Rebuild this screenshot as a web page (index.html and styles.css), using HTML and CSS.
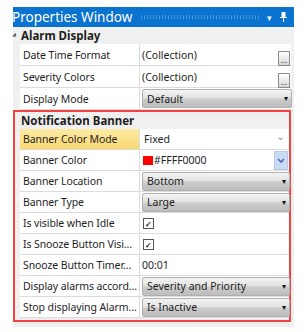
FILE: index.html
```html
<!DOCTYPE html>
<html>
<head>
  <meta charset="UTF-8">
  <title>Properties Window</title>
  <link rel="stylesheet" href="styles.css">
</head>
<body>
  <div class="panel">
    <div class="titlebar">
      <span class="title">Properties Window</span>
      <span class="grip"></span>
      <span class="tb-arrow">&#9662;</span>
      <svg class="pin" width="7" height="10" viewBox="0 0 7 10">
        <rect x="1.5" y="0" width="4" height="5" fill="#fff"/>
        <rect x="0" y="5" width="7" height="1" fill="#fff"/>
        <rect x="3" y="6" width="1" height="4" fill="#fff"/>
      </svg>
    </div>

    <div class="grid">
      <div class="category"><span class="toggle">&#9698;</span>Alarm Display</div>

      <div class="row tall">
        <div class="name">Date Time Format</div>
        <div class="value">(Collection)<span class="ellipsis">...</span></div>
      </div>
      <div class="row tall">
        <div class="name">Severity Colors</div>
        <div class="value">(Collection)<span class="ellipsis">...</span></div>
      </div>
      <div class="row tall">
        <div class="name">Display Mode</div>
        <div class="value"><div class="combo">Default<span class="tri">&#9662;</span></div></div>
      </div>

      <div class="marked">
        <div class="category">Notification Banner</div>

        <div class="row selected">
          <div class="name">Banner Color Mode</div>
          <div class="value flat">Fixed<span class="chev">&#8964;</span></div>
        </div>
        <div class="row">
          <div class="name">Banner Color</div>
          <div class="value"><span class="swatch"></span>#FFFF0000<span class="color-btn">
            <svg width="8" height="6" viewBox="0 0 8 6"><path d="M1 1 L4 4 L7 1" stroke="#4a68b0" stroke-width="1.6" fill="none"/></svg>
          </span></div>
        </div>
        <div class="row">
          <div class="name">Banner Location</div>
          <div class="value"><div class="combo">Bottom<span class="tri">&#9662;</span></div></div>
        </div>
        <div class="row">
          <div class="name">Banner Type</div>
          <div class="value"><div class="combo">Large<span class="tri">&#9662;</span></div></div>
        </div>
        <div class="row">
          <div class="name">Is visible when Idle</div>
          <div class="value"><span class="check">&#10003;</span></div>
        </div>
        <div class="row">
          <div class="name">Is Snooze Button Visi...</div>
          <div class="value"><span class="check">&#10003;</span></div>
        </div>
        <div class="row">
          <div class="name">Snooze Button Timer...</div>
          <div class="value">00:01</div>
        </div>
        <div class="row">
          <div class="name">Display alarms accord...</div>
          <div class="value"><div class="combo">Severity and Priority<span class="tri">&#9662;</span></div></div>
        </div>
        <div class="row">
          <div class="name">Stop displaying Alarm...</div>
          <div class="value"><div class="combo">Is Inactive<span class="tri">&#9662;</span></div></div>
        </div>
      </div>
    </div>
  </div>
</body>
</html>
```

FILE: styles.css
```css
body { margin: 0; background: #fff; font-family: "Noto Sans", "Open Sans", sans-serif; font-size: 10.5px; color: #1e1e1e; }

.panel { margin: 7px 0 0 13px; width: 281px; }

.titlebar { height: 20px; background: #0a72cf; color: #fff; display: flex; align-items: center; overflow: hidden; }
.title { font-size: 13.5px; margin-left: -1px; white-space: nowrap; }
.grip { flex: 1; height: 4px; margin: 0 8px 0 8px;
  background-image: radial-gradient(circle, rgba(255,255,255,0.28) 0.5px, transparent 0.7px);
  background-size: 3px 2px; }
.tb-arrow { font-size: 9px; margin-right: 8px; }
.pin { margin-right: 7px; }

.grid { background: #f0f0f0; padding-bottom: 5px; }

.category { height: 17px; display: flex; align-items: center; font-weight: bold; font-size: 11.5px; padding-left: 8px; position: relative; }
.toggle { position: absolute; left: -1px; top: 4px; font-size: 5px; color: #555; font-weight: normal; }

.row { display: flex; margin: 0 3px 0 7px; background: #fff; border-bottom: 1px solid #dcdcdc; height: 20px; }
.row.tall { height: 21px; }
.name { width: 116px; padding-left: 3px; border-right: 1px solid #dcdcdc; display: flex; align-items: center; white-space: nowrap; overflow: hidden; letter-spacing: -0.1px; }
.value { flex: 1; display: flex; align-items: center; padding-left: 2px; position: relative; white-space: nowrap; }

.selected .name { background: linear-gradient(#fdeaa4, #f9d873); }

.ellipsis { position: absolute; right: 1px; top: 7px; width: 10px; height: 13px; border: 1px solid #8a8a8a;
  background: linear-gradient(#ffffff, #d8d8d8); font-size: 8px; line-height: 16px; text-align: center; color: #333; }

.combo { flex: 1; height: 17px; margin-right: -1px; border: 1px solid #b0b0b0; border-radius: 2px; padding-left: 4px;
  display: flex; align-items: center; position: relative;
  background: linear-gradient(#f4f4f4 0%, #e2e2e2 45%, #cbcbcb 55%, #bdbdbd 100%); }
.tri { position: absolute; right: 3px; top: 2px; font-size: 8px; color: #111; }

.flat { padding-left: 4px; }
.chev { position: absolute; right: 4px; top: -1px; color: #999; font-size: 11px; }

.swatch { width: 10px; height: 9px; background: #ff0000; border: 0; margin: 0 1px 0 1px; }
.color-btn { position: absolute; right: 1px; top: 1px; width: 12px; height: 17px; background: #cbdaf3; border: 1px solid #b5c8ea;
  display: flex; align-items: center; justify-content: center; }

.check { width: 9px; height: 9px; border: 1px solid #555; background: #fff; margin-left: 1px; font-size: 8px; line-height: 9px; text-align: center; font-weight: bold; color: #222; }

.marked { border: 2px solid #f24343; margin-right: 3px; padding-bottom: 2px; background: #f0f0f0; }
.marked .category { padding-left: 6px; }
.marked .row { margin: 0 0 0 5px; }
```
